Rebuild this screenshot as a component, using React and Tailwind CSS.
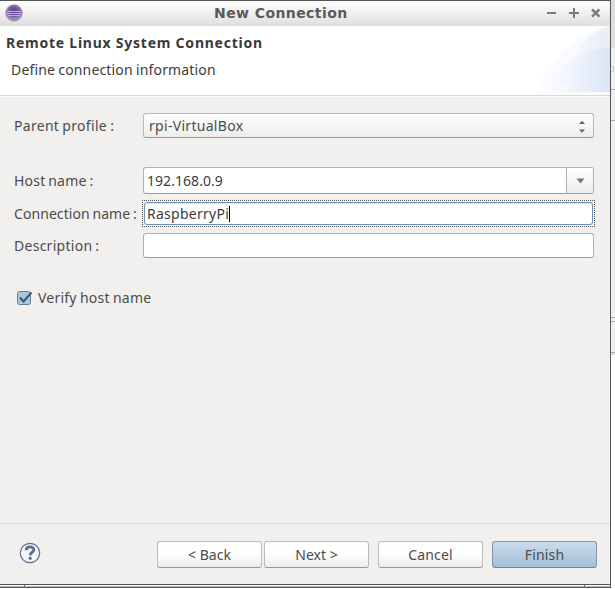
import React from "react";

const field =
  "box-border rounded-[3px] border border-[#b3b1ae] border-b-[#9f9d9a] bg-white";

function Label({ children, className = "" }) {
  return (
    <span className={"block whitespace-nowrap leading-5 " + className}>
      {children}
    </span>
  );
}

function Button({ children, primary = false, className = "" }) {
  const look = primary
    ? "border-[#8695a6] border-b-[#74818f] bg-gradient-to-b from-[#c9dcec] to-[#a3bfd9]"
    : "border-[#bdbbb8] border-b-[#9b9996] bg-gradient-to-b from-white via-[#fdfdfd] to-[#ececeb]";
  return (
    <button
      className={
        "flex h-[27px] w-[105px] items-center justify-center rounded-[3px] border whitespace-nowrap " +
        look +
        " " +
        className
      }
    >
      {children}
    </button>
  );
}

function EclipseIcon() {
  return (
    <svg width="18" height="18" viewBox="0 0 18 18" className="mb-px">
      <defs>
        <radialGradient id="ball" cx="0.5" cy="0.42" r="0.6">
          <stop offset="0" stopColor="#5b3f86" />
          <stop offset="0.5" stopColor="#765b9d" />
          <stop offset="1" stopColor="#b5a6c8" />
        </radialGradient>
      </defs>
      <circle cx="9" cy="9" r="8.3" fill="url(#ball)" stroke="#8f84a3" strokeWidth="0.6" />
      <path d="M2.5 7.5h13M2 9.5h14M2.5 11.5h13" stroke="#d3c6e2" strokeWidth="0.8" />
      <path d="M3 14h12" stroke="#a78fc2" strokeWidth="1" />
    </svg>
  );
}

function TitleBar() {
  return (
    <div className="flex h-[25px] items-center bg-gradient-to-b from-white to-[#dfdfdf] pl-[5px]">
      <EclipseIcon />
      <div className="ml-[191px] w-[324px] whitespace-nowrap font-['DejaVu_Sans'] text-[14px] font-bold tracking-[0.42px] text-[#5a5a5a]">
        New Connection
      </div>
      <svg width="60" height="14" viewBox="0 0 60 14" className="mb-px ml-[6px]" fill="none" stroke="#7b7b7b">
        <path d="M3 7h9M25 7h10M30 2v10" strokeWidth="2" />
        <path d="M48 3.3l7.4 7.4M55.4 3.3l-7.4 7.4" strokeWidth="2.4" />
      </svg>
    </div>
  );
}

function Header() {
  return (
    <div className="flex h-[69px] justify-between bg-white">
      <div className="pl-[6px] pt-[7px]">
        <Label className="text-[14px] font-bold tracking-[0.76px] text-[#3a3a3a]">
          Remote Linux System Connection
        </Label>
        <Label className="ml-[5px] mt-[7px] tracking-[0.16px] text-[#3c3c3c] [word-spacing:-0.6px]">
          Define connection information
        </Label>
      </div>
      <svg width="75" height="66" viewBox="0 0 75 66">
        <defs>
          <linearGradient id="wave" x1="0" x2="1" y1="0" y2="0">
            <stop offset="0" stopColor="#fff" />
            <stop offset="0.5" stopColor="#f5f8fd" />
            <stop offset="1" stopColor="#e6edf9" />
          </linearGradient>
          <linearGradient id="front" x1="0" x2="1" y1="0" y2="0">
            <stop offset="0" stopColor="#fff" />
            <stop offset="0.5" stopColor="#eff4fc" />
            <stop offset="1" stopColor="#dbe5f6" />
          </linearGradient>
        </defs>
        <path d="M2 66C16 30 42 6 75 0V66Z" fill="#fafbfe" />
        <path d="M34 36C44 18 57 5 75 0V66H2Z" fill="url(#wave)" />
        <path d="M2 66C18 40 44 26 75 21V66Z" fill="url(#front)" />
      </svg>
    </div>
  );
}

function Form() {
  return (
    <div className="h-[427px] border-t border-white pl-[14px] pt-4">
      <div className="flex h-[26px] items-center">
        <Label className="w-[129px] tracking-[0.3px] [word-spacing:-0.8px]">Parent profile :</Label>
        <div className="flex h-[25px] w-[451px] items-center justify-between self-start rounded-[3px] border border-[#bdbbb8] border-b-[#9b9996] bg-gradient-to-b from-white via-[#f6f6f5] to-[#eeedec] pl-[5px] pr-[7px]">
          <Label className="pt-px tracking-[0.3px]">rpi-VirtualBox</Label>
          <svg width="8" height="13" viewBox="0 0 8 13" className="mt-px" fill="#666">
            <path d="M1 4L4 0.8L7 4ZM1 9.5L4 12.7L7 9.5Z" />
          </svg>
        </div>
      </div>
      <div className="mt-7 flex h-[28px] items-center">
        <Label className="w-[129px] tracking-[0.2px] [word-spacing:-1px]">Host name :</Label>
        <div className="flex h-[27px] w-[451px] self-start overflow-hidden rounded-[3px] border border-[#b3b1ae] border-b-[#9f9d9a] bg-white">
          <Label className="w-[422px] pl-[3px] pt-[3px] tracking-[0.05px] text-[#3c3c3c]">192.168.0.9</Label>
          <div className="flex flex-1 items-center justify-center border-l border-[#b3b1ae] bg-gradient-to-b from-white to-[#eeedec]">
            <svg width="9" height="6" viewBox="0 0 9 6" className="mt-px">
              <path d="M0.5 0.5H8.5L4.5 5.5Z" fill="#777" />
            </svg>
          </div>
        </div>
      </div>
      <div className="mt-[5px] flex h-[27px] items-center">
        <Label className="w-[128px] tracking-[0.07px] [word-spacing:-1px]">Connection name :</Label>
        <div className="h-[27px] w-[453px] border border-dotted border-[#555] p-px">
          <div className="flex h-[23px] items-center rounded-[3px] border border-[#6b93b8] bg-white pl-[2px] shadow-[inset_0_1px_0_#dceaf7]">
            <Label className="tracking-[0.27px] text-[#3c3c3c]">RaspberryPi</Label>
            <span className="h-4 w-px bg-black" />
          </div>
        </div>
      </div>
      <div className="mt-[6px] flex h-[25px] items-center">
        <Label className="w-[129px] tracking-[0.27px] [word-spacing:-1px]">Description :</Label>
        <div className={field + " h-[25px] w-[451px]"} />
      </div>
      <div className="mt-[30px] flex h-5 items-center pl-[2px]">
        <svg width="18" height="18" viewBox="0 0 18 18">
          <rect x="1.5" y="2.5" width="13" height="13" rx="2" fill="#a9c6df" stroke="#62819f" />
          <path d="M4 8.5L7.5 12.5L15.5 3.5" fill="none" stroke="#3c546c" strokeWidth="2" />
        </svg>
        <Label className="ml-1 tracking-[0.22px] [word-spacing:-0.6px]">Verify host name</Label>
      </div>
    </div>
  );
}

function Footer() {
  return (
    <div className="flex h-[61px] border-t border-[#d9d8d6] pt-[17px]">
      <svg width="22" height="22" viewBox="0 0 22 22" className="ml-[19px] mt-px" fill="none">
        <circle cx="11" cy="11" r="9.7" fill="#f5f6f8" stroke="#5d6e8f" strokeWidth="1.2" />
        <path d="M7.2 8.2C7.2 3.9 14.8 3.9 14.8 7.8C14.8 10.4 11.2 10.2 11.2 13.2" stroke="#5d6e8f" strokeWidth="2.9" />
        <circle cx="11.2" cy="16.2" r="1.6" fill="#5d6e8f" />
      </svg>
      <Button className="ml-[116px]">&lt; Back</Button>
      <Button className="ml-[2px]">Next &gt;</Button>
      <Button className="ml-[9px] tracking-[0.15px]">Cancel</Button>
      <Button primary className="ml-[9px] tracking-[0.15px]">Finish</Button>
    </div>
  );
}

export default function App() {
  return (
    <div className="h-[589px] w-[615px] overflow-hidden bg-white font-['Noto_Sans',sans-serif] text-[14px] text-[#4c4c4c]">
      <div className="flex h-[585px]">
        <div className="w-[611px] border-y border-r border-[#555] bg-[#f1f0ee]">
          <TitleBar />
          <Header />
          <div className="h-px bg-[#d9d8d6]" />
          <Form />
          <Footer />
        </div>
        <div className="w-1 bg-[#f1f0ee]">
          <div className="h-[48px] bg-[#dedede]" />
          <div className="h-[18px]" />
          <div className="h-[6px] w-[3px] rounded-r-[2px] border border-l-0 border-[#ccc9bf]" />
          <div className="h-[17px]" />
          <div className="h-px bg-[#aaa]" />
          <div className="h-[30px]" />
          <div className="h-px bg-[#aaa]" />
          <div className="h-[196px]" />
          <div className="h-px bg-[#aaa]" />
          <div className="h-[3px]" />
          <div className="h-px bg-[#aaa]" />
          <div className="h-[30px]" />
          <div className="h-px bg-[#aaa]" />
          <div className="h-[2px] bg-[#dedede]" />
          <div className="h-[230px] bg-white" />
        </div>
      </div>
      <div className="flex h-[3px] w-[611px] border-b border-r border-[#555]">
        <div className="w-[25px] border-b border-r border-b-[#bbb] border-r-[#555]" />
        <div className="w-[560px] border-b border-r border-b-[#bbb] border-r-[#555]" />
        <div className="flex-1 border-b border-[#bbb]" />
      </div>
    </div>
  );
}
